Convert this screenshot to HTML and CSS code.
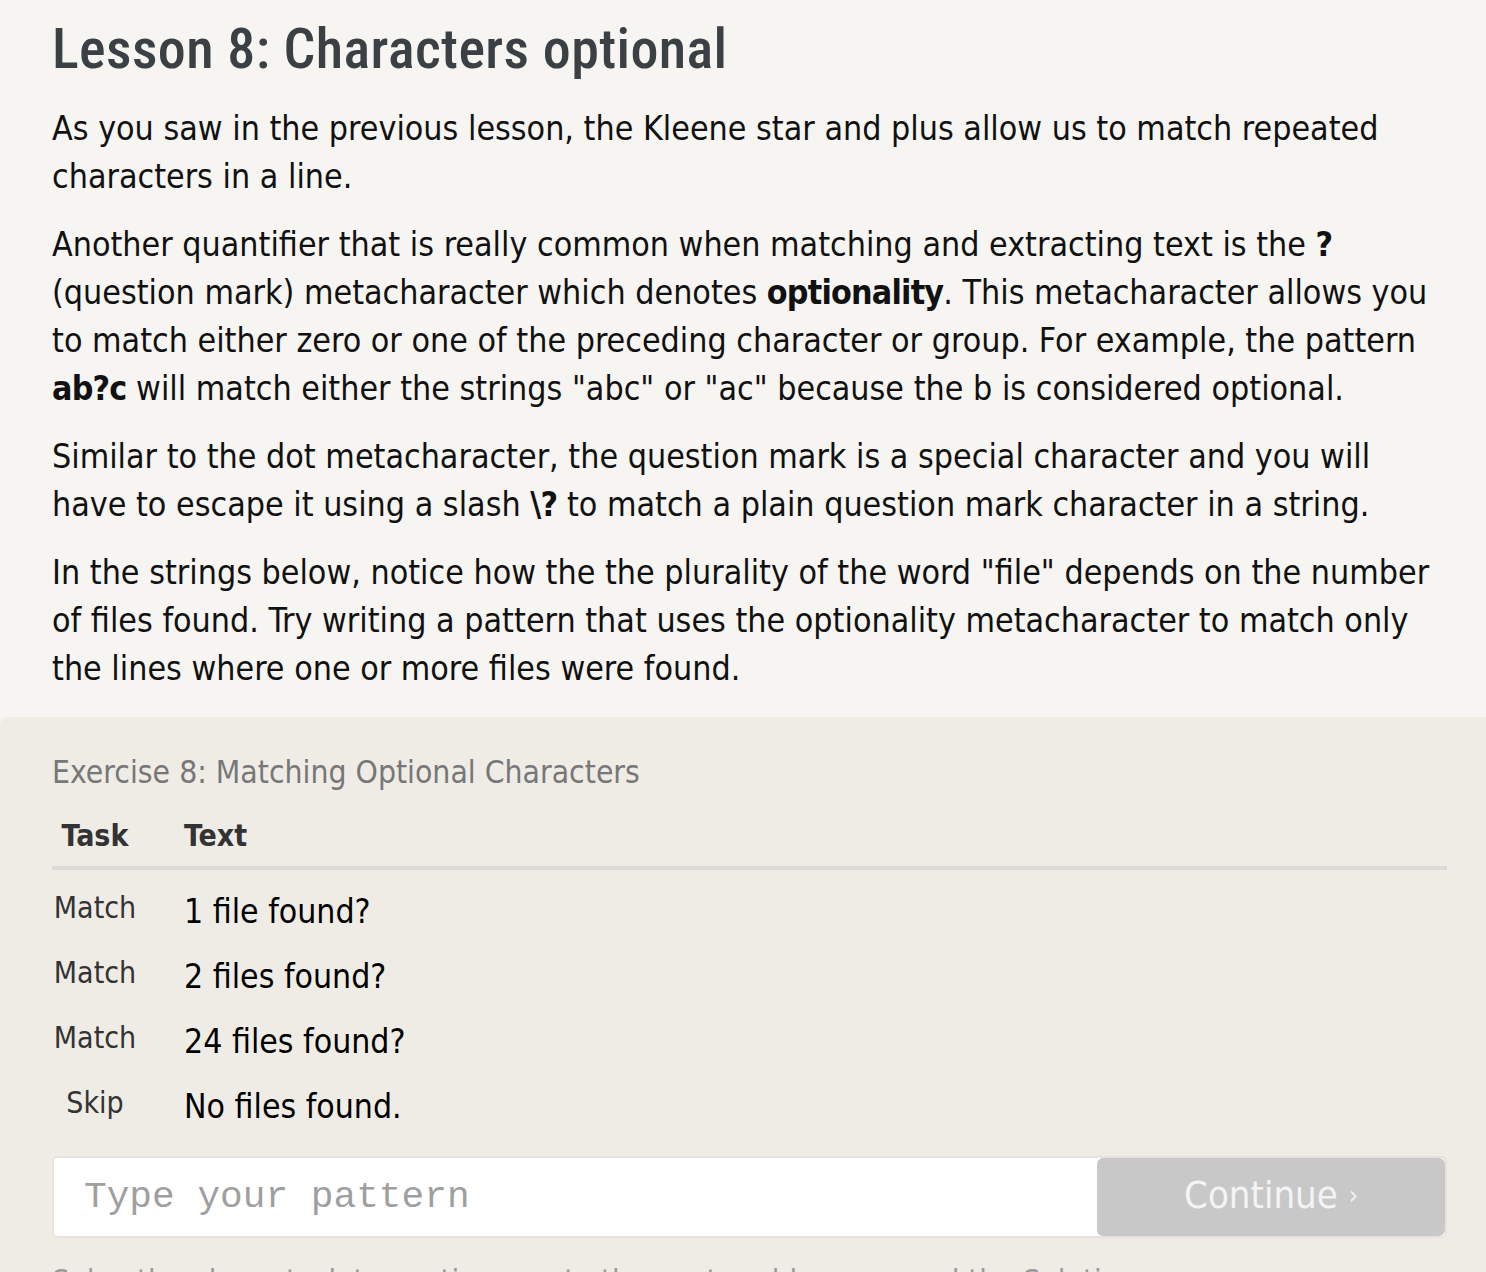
FILE: index.html
```html
<!DOCTYPE html>
<html lang="en">
<head>
<meta charset="utf-8">
<title>Lesson 8: Characters optional</title>
<link rel="stylesheet" href="styles.css">
</head>
<body>
<div class="page">
  <section class="lesson">
    <h1 class="lesson-title">Lesson 8: Characters optional</h1>
    <p class="para">As you saw in the previous lesson, the Kleene star and plus allow us to match repeated characters in a line.</p>
    <p class="para">Another quantifier that is really common when matching and extracting text is the <b>?</b> (question mark) metacharacter which denotes <b>optionality</b>. This metacharacter allows you to match either zero or one of the preceding character or group. For example, the pattern <b>ab?c</b> will match either the strings "abc" or "ac" because the b is considered optional.</p>
    <p class="para">Similar to the dot metacharacter, the question mark is a special character and you will have to escape it using a slash <b>\?</b> to match a plain question mark character in a string.</p>
    <p class="para para-last">In the strings below, notice how the the plurality of the word "file" depends on the number of files found. Try writing a pattern that uses the optionality metacharacter to match only the lines where one or more files were found.</p>
  </section>

  <section class="exercise">
    <h2 class="exercise-title">Exercise 8: Matching Optional Characters</h2>
    <div class="task-table">
      <div class="task-head">
        <div class="col-task">Task</div>
        <div class="col-text">Text</div>
      </div>
      <div class="task-row">
        <div class="col-task task-label">Match</div>
        <div class="col-text task-text">1 file found?</div>
      </div>
      <div class="task-row">
        <div class="col-task task-label">Match</div>
        <div class="col-text task-text">2 files found?</div>
      </div>
      <div class="task-row">
        <div class="col-task task-label">Match</div>
        <div class="col-text task-text">24 files found?</div>
      </div>
      <div class="task-row">
        <div class="col-task task-label">Skip</div>
        <div class="col-text task-text">No files found.</div>
      </div>
    </div>

    <div class="answer">
      <input class="answer-input" type="text" placeholder="Type your pattern">
      <button class="continue-btn" type="button">Continue <span class="chev">›</span></button>
    </div>

    <p class="hint">Solve the above task to continue on to the next problem, or read the Solution.</p>
  </section>
</div>
</body>
</html>
```
FILE: styles.css
```css
html, body {
  margin: 0;
  padding: 0;
}

body {
  background: #f6f5f1;
  font-family: "DejaVu Sans Condensed", "DejaVu Sans", sans-serif;
  color: #111;
  overflow: hidden;
}

.page {
  width: 1486px;
}

.lesson {
  padding: 17px 39px 0 52px;
}

.lesson-title {
  margin: 0 0 24px;
  font-family: Roboto, "Liberation Sans", sans-serif;
  font-stretch: condensed;
  font-weight: 500;
  font-size: 56px;
  line-height: 64px;
  color: #3b4045;
  letter-spacing: 0.4px;
}

.para {
  margin: 0 0 20px;
  font-size: 33.7px;
  line-height: 48px;
}

.para-last {
  margin-bottom: 24px;
}

.para b {
  font-weight: bold;
  letter-spacing: -0.8px;
}

.exercise {
  background: #efece6;
  border-radius: 8px 0 0 0;
  padding: 35px 39px 0 52px;
  height: 600px;
}

.exercise-title {
  margin: 0 0 24px;
  font-weight: normal;
  font-size: 31.6px;
  line-height: 40px;
  color: #777;
}

.task-head {
  display: grid;
  grid-template-columns: 86px 1fr;
  column-gap: 46px;
  font-weight: bold;
  font-size: 30px;
  line-height: 40px;
  color: #333;
  padding-bottom: 10px;
  border-bottom: 4px solid #dcdbd8;
  margin-bottom: 9px;
}

.col-task {
  text-align: center;
}

.task-row {
  display: grid;
  grid-template-columns: 86px 1fr;
  column-gap: 46px;
  align-items: start;
}

.task-label {
  font-size: 30px;
  line-height: 58px;
  color: #333;
}

.task-text {
  font-size: 33.5px;
  line-height: 65px;
  color: #000;
}

.answer {
  display: flex;
  margin-top: 17px;
  height: 82px;
  border: 2px solid #e6e3dc;
  border-radius: 6px;
  box-sizing: border-box;
  background: #fff;
  overflow: hidden;
}

.answer-input {
  flex: 1;
  min-width: 0;
  border: none;
  outline: none;
  background: #fff;
  padding: 0 0 0 30px;
  font-family: "Liberation Mono", "Courier New", monospace;
  font-size: 37.8px;
  color: #333;
}

.answer-input::placeholder {
  color: #9f9f9f;
}

.continue-btn {
  width: 348px;
  border: none;
  border-radius: 6px;
  background: #c8c8c8;
  color: #f4f4f4;
  font-family: "DejaVu Sans Condensed", "DejaVu Sans", sans-serif;
  font-size: 38px;
  padding: 0 0 4px;
  cursor: pointer;
}

.chev {
  font-size: 26px;
  vertical-align: 4px;
}

.hint {
  margin: 22px 0 0;
  font-size: 31px;
  line-height: 40px;
  color: #999;
}
```
